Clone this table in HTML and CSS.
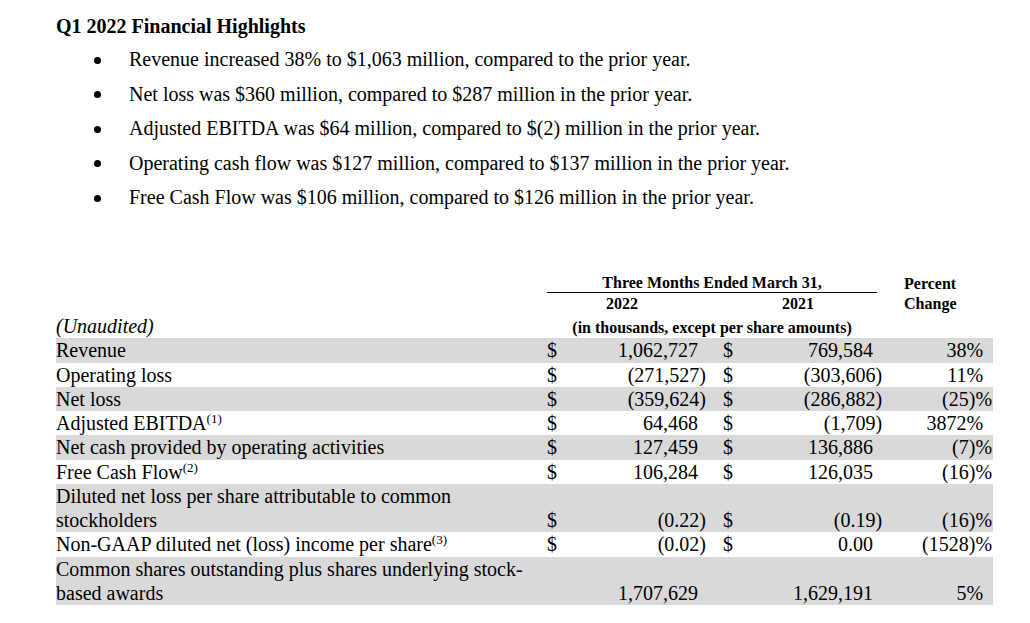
FILE: index.html
```html
<!DOCTYPE html>
<html lang="en">
<head>
<meta charset="utf-8">
<title>Q1 2022 Financial Highlights</title>
<link rel="stylesheet" href="styles.css">
</head>
<body>
<main class="page">
  <h1 class="title">Q1 2022 Financial Highlights</h1>
  <ul class="highlights">
    <li>Revenue increased 38% to $1,063 million, compared to the prior year.</li>
    <li>Net loss was $360 million, compared to $287 million in the prior year.</li>
    <li>Adjusted EBITDA was $64 million, compared to $(2) million in the prior year.</li>
    <li>Operating cash flow was $127 million, compared to $137 million in the prior year.</li>
    <li>Free Cash Flow was $106 million, compared to $126 million in the prior year.</li>
  </ul>

  <table class="fin">
    <colgroup>
      <col class="c-label">
      <col class="c-d1">
      <col class="c-v1">
      <col class="c-d2">
      <col class="c-v2">
      <col class="c-pct">
    </colgroup>
    <thead>
      <tr class="h1">
        <th></th>
        <th colspan="4"><div class="period">Three Months Ended March 31,</div></th>
        <th class="pcthead">Percent</th>
      </tr>
      <tr class="h2">
        <th></th>
        <th colspan="2" class="y22">2022</th>
        <th colspan="2" class="y21">2021</th>
        <th class="pcthead">Change</th>
      </tr>
    </thead>
    <tbody>
      <tr>
        <td class="label"><em>(Unaudited)</em></td>
        <td colspan="4" class="units">(in thousands, except per share amounts)</td>
        <td></td>
      </tr>
      <tr class="shade">
        <td class="label">Revenue</td>
        <td class="d1">$</td><td class="v1">1,062,727</td>
        <td class="d2">$</td><td class="v2">769,584</td>
        <td class="pct">38%</td>
      </tr>
      <tr>
        <td class="label">Operating loss</td>
        <td class="d1">$</td><td class="v1 neg">(271,527)</td>
        <td class="d2">$</td><td class="v2 neg">(303,606)</td>
        <td class="pct">11%</td>
      </tr>
      <tr class="shade">
        <td class="label">Net loss</td>
        <td class="d1">$</td><td class="v1 neg">(359,624)</td>
        <td class="d2">$</td><td class="v2 neg">(286,882)</td>
        <td class="pct neg">(25)%</td>
      </tr>
      <tr>
        <td class="label">Adjusted EBITDA<sup>(1)</sup></td>
        <td class="d1">$</td><td class="v1">64,468</td>
        <td class="d2">$</td><td class="v2 neg">(1,709)</td>
        <td class="pct">3872%</td>
      </tr>
      <tr class="shade">
        <td class="label">Net cash provided by operating activities</td>
        <td class="d1">$</td><td class="v1">127,459</td>
        <td class="d2">$</td><td class="v2">136,886</td>
        <td class="pct neg">(7)%</td>
      </tr>
      <tr>
        <td class="label">Free Cash Flow<sup>(2)</sup></td>
        <td class="d1">$</td><td class="v1">106,284</td>
        <td class="d2">$</td><td class="v2">126,035</td>
        <td class="pct neg">(16)%</td>
      </tr>
      <tr class="shade">
        <td class="label">Diluted net loss per share attributable to common stockholders</td>
        <td class="d1">$</td><td class="v1 neg">(0.22)</td>
        <td class="d2">$</td><td class="v2 neg">(0.19)</td>
        <td class="pct neg">(16)%</td>
      </tr>
      <tr>
        <td class="label">Non-GAAP diluted net (loss) income per share<sup>(3)</sup></td>
        <td class="d1">$</td><td class="v1 neg">(0.02)</td>
        <td class="d2">$</td><td class="v2">0.00</td>
        <td class="pct neg">(1528)%</td>
      </tr>
      <tr class="shade">
        <td class="label">Common shares outstanding plus shares underlying stock-based awards</td>
        <td class="d1"></td><td class="v1">1,707,629</td>
        <td class="d2"></td><td class="v2">1,629,191</td>
        <td class="pct">5%</td>
      </tr>
    </tbody>
  </table>
</main>
</body>
</html>
```

FILE: styles.css
```css
html, body {
  margin: 0;
  padding: 0;
  background: #ffffff;
}

body {
  font-family: "Liberation Serif", "Times New Roman", serif;
  color: #000000;
}

.page {
  padding: 15px 0 0 56px;
}

.title {
  margin: 0;
  font-size: 20px;
  font-weight: bold;
  line-height: 23px;
}

.highlights {
  list-style: none;
  margin: 4px 0 0 0;
  padding: 0 0 0 37.5px;
  font-size: 20px;
}

.highlights li {
  line-height: 34.5px;
}

.highlights li::before {
  content: "";
  display: inline-block;
  width: 7px;
  height: 7px;
  border-radius: 50%;
  background: #000000;
  vertical-align: middle;
  margin: 0 28.5px 0 0;
  position: relative;
  top: -1px;
}

.fin {
  margin-top: 58.5px;
  border-collapse: collapse;
  table-layout: fixed;
  width: 937px;
  font-size: 20px;
}

.c-label { width: 491px; }
.c-d1 { width: 20px; }
.c-v1 { width: 139px; }
.c-d2 { width: 34px; }
.c-v2 { width: 142px; }
.c-pct { width: 111px; }

.fin th,
.fin td {
  padding: 0;
  font-weight: normal;
}

.fin thead th {
  font-size: 16px;
  font-weight: bold;
}

.fin .h1 th {
  line-height: 19px;
  vertical-align: bottom;
}

.fin .h2 th {
  line-height: 21px;
}

.period {
  border-bottom: 1px solid #000000;
  margin-right: 5px;
  text-align: center;
}

.fin .y22 {
  text-align: center;
  padding-right: 9px;
}

.fin .y21 {
  text-align: center;
  padding-left: 8px;
}

.fin .pcthead {
  text-align: left;
  padding-left: 22px;
}

.fin tbody td {
  line-height: 24.27px;
  vertical-align: bottom;
}

.fin .shade td {
  background: #d9d9d9;
}

.label {
  text-align: left;
  padding-right: 10px;
}

.fin tbody td.units {
  font-size: 16px;
  font-weight: bold;
  text-align: center;
  vertical-align: bottom;
  padding: 0 5px 0 0;
  line-height: 20px;
}

.d1 {
  text-align: left;
}

.fin td.d2 {
  text-align: left;
  padding-left: 17px;
}

.fin td.v1 {
  text-align: right;
  padding-right: 8px;
}

.fin td.v2 {
  text-align: right;
  padding-right: 9px;
}

.fin td.pct {
  text-align: right;
  padding-right: 10px;
}

.fin td.neg {
  padding-right: 0;
}

.fin td.pct.neg {
  padding-right: 1px;
}

sup {
  font-size: 13px;
  line-height: 0;
  vertical-align: 7px;
}
```
